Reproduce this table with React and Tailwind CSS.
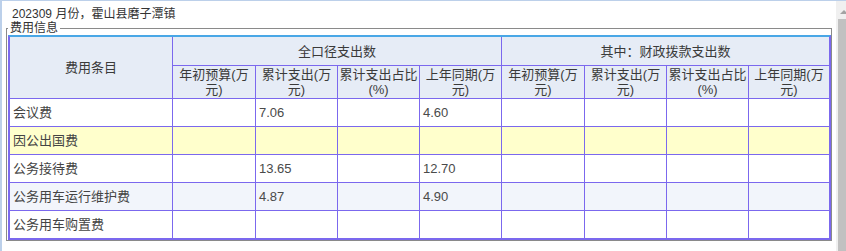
import React from "react";

const FONT = "font-[family-name:'Liberation_Sans','Noto_Sans_CJK_SC',sans-serif]";

const subHeads = [
  ["年初预算(万", "元)"],
  ["累计支出(万", "元)"],
  ["累计支出占比", "(%)"],
  ["上年同期(万", "元)"],
  ["年初预算(万", "元)"],
  ["累计支出(万", "元)"],
  ["累计支出占比", "(%)"],
  ["上年同期(万", "元)"],
];

const rows = [
  { name: "会议费", values: ["", "7.06", "", "4.60", "", "", "", ""], bg: "bg-white" },
  { name: "因公出国费", values: ["", "", "", "", "", "", "", ""], bg: "bg-[#ffffcc]" },
  { name: "公务接待费", values: ["", "13.65", "", "12.70", "", "", "", ""], bg: "bg-white" },
  { name: "公务用车运行维护费", values: ["", "4.87", "", "4.90", "", "", "", ""], bg: "bg-[#f2f5fb]" },
  { name: "公务用车购置费", values: ["", "", "", "", "", "", "", ""], bg: "bg-white" },
];

function HeadCell({ children, className = "" }) {
  return (
    <div className={`flex items-center justify-center bg-[#e6ecf6] text-center text-[13px] leading-[15px] text-[#3a3a3a] ${className}`}>
      {children}
    </div>
  );
}

function ExpenseTable() {
  return (
    <div className="border-x-2 border-b-2 border-t-2 border-[#7b68ee] border-t-[#49a7e6]">
      <div className="grid grid-cols-[162px_82px_81px_81px_81px_82px_81px_81px_80px] grid-rows-[28px_32px_27px_27px_27px_27px_27px] gap-px bg-[#7b68ee]">
        <HeadCell className="row-span-2">费用条目</HeadCell>
        <HeadCell className="col-span-4">全口径支出数</HeadCell>
        <HeadCell className="col-span-4">其中：财政拨款支出数</HeadCell>
        {subHeads.map((h, i) => (
          <HeadCell key={i}>
            <span>
              {h[0]}
              <br />
              {h[1]}
            </span>
          </HeadCell>
        ))}
        {rows.map((r) => (
          <React.Fragment key={r.name}>
            <div className={`flex items-center pl-[3px] text-[13px] text-[#444] ${r.bg}`}>{r.name}</div>
            {r.values.map((v, j) => (
              <div key={j} className={`flex items-center pl-[3px] text-[13px] text-[#4a4a4a] ${r.bg}`}>
                {v}
              </div>
            ))}
          </React.Fragment>
        ))}
      </div>
    </div>
  );
}

export default function App() {
  return (
    <div className={`flex h-[251px] w-[846px] overflow-hidden border-t border-[#bcd0ea] bg-white ${FONT}`}>
      <div className="flex-1 border-l-2 border-[#bcd0ea]">
        <div className="h-[20px] pl-[10px] pt-[4px] text-[12px] leading-[18px] text-[#333]">
          202309 月份，霍山县磨子潭镇
        </div>
        <fieldset className="mx-[4px] border border-[#8a8a8a] pl-[1px]">
          <legend className="px-[2px] text-[12px] leading-[14px] text-[#333]">费用信息</legend>
          <ExpenseTable />
        </fieldset>
      </div>
      <div className="flex w-[10px] flex-col bg-[#f0f0f0]">
        <div className="h-[18px] pl-[4px] pt-[9px]">
          <div className="h-0 w-0 border-x-[4px] border-b-[4px] border-x-transparent border-b-[#a3a3a3]" />
        </div>
        <div className="ml-[2px] flex-1 bg-[#c1c1c1]" />
      </div>
    </div>
  );
}
